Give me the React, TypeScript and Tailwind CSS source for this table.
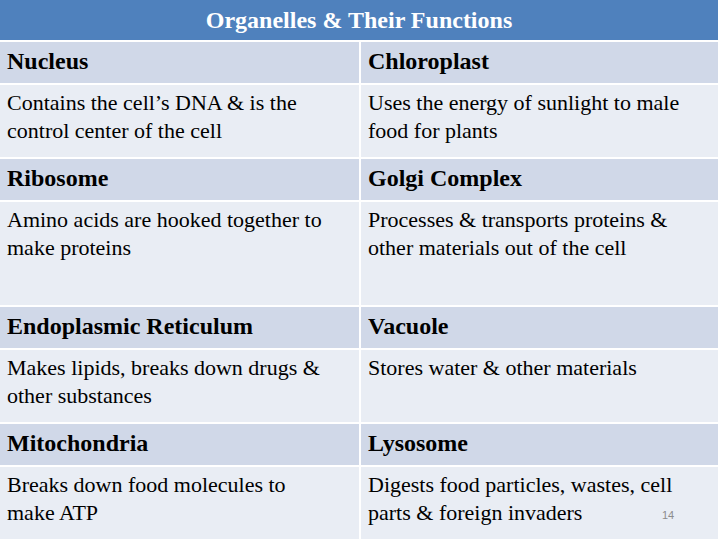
const ROWS: { left: string[]; right: string[]; title: boolean; h: string }[] = [
  { left: ['Nucleus'], right: ['Chloroplast'], title: true, h: 'h-[41px]' },
  {
    left: ['Contains the cell’s DNA & is the', 'control center of the cell'],
    right: ['Uses the energy of sunlight to male', 'food for plants'],
    title: false,
    h: 'h-[72px]',
  },
  { left: ['Ribosome'], right: ['Golgi Complex'], title: true, h: 'h-[41px]' },
  {
    left: ['Amino acids are hooked together to', 'make proteins'],
    right: ['Processes & transports proteins &', 'other materials out of the cell'],
    title: false,
    h: 'h-[103px]',
  },
  { left: ['Endoplasmic Reticulum'], right: ['Vacuole'], title: true, h: 'h-[41px]' },
  {
    left: ['Makes lipids, breaks down drugs &', 'other substances'],
    right: ['Stores water & other materials'],
    title: false,
    h: 'h-[72px]',
  },
  { left: ['Mitochondria'], right: ['Lysosome'], title: true, h: 'h-[41px]' },
  {
    left: ['Breaks down food molecules to', 'make ATP'],
    right: ['Digests food particles, wastes, cell', 'parts & foreign invaders'],
    title: false,
    h: 'h-[72px]',
  },
];

export default function App() {
  return (
    <div className="relative h-[540px] w-[720px] overflow-hidden bg-white">
      <div className="flex w-[718px] flex-col gap-[2px]">
        {/* Header */}
        <div className="flex h-[40px] items-center justify-center bg-[#4f81bd] text-[24px] font-bold text-white [font-family:'Liberation_Serif','Times_New_Roman',serif]">
          Organelles &amp; Their Functions
        </div>

        {ROWS.map((row, i) => (
          <div key={i} className={`grid grid-cols-[359px_357px] gap-[2px] ${row.h}`}>
            {[row.left, row.right].map((lines, j) => (
              <div
                key={j}
                className={`whitespace-nowrap pl-[7px] text-black ${
                  row.title
                    ? 'bg-[#d0d8e8] pt-[5px] text-[24px] font-bold leading-[28px]'
                    : 'bg-[#e9edf4] pt-[4px] text-[22px] leading-[28px]'
                }`}>
                {lines.map((line) => (
                  <div key={line} className="[font-family:'Liberation_Serif','Times_New_Roman',serif]">
                    {line}
                  </div>
                ))}
              </div>
            ))}
          </div>
        ))}
      </div>

      {/* Slide number */}
      <div className="absolute left-[662px] top-[507px] text-[11px] text-[#8c8c8c] [font-family:'Liberation_Sans',Arial,sans-serif]">
        14
      </div>
    </div>
  );
}
